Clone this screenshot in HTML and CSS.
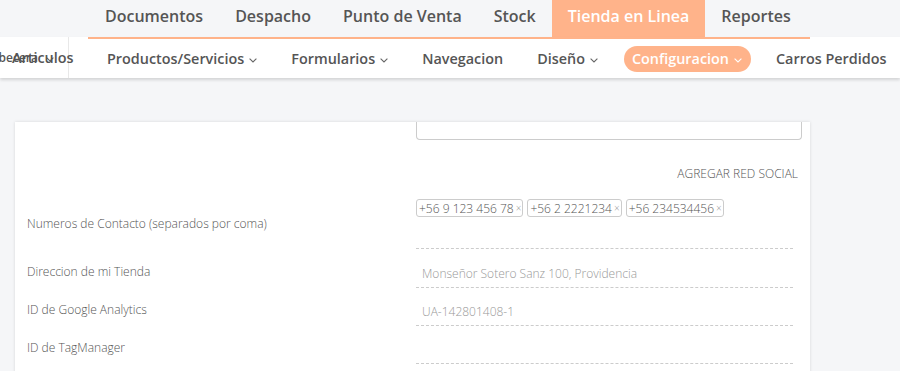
FILE: index.html
```html
<!DOCTYPE html>
<html lang="es">
<head>
    <meta charset="UTF-8">
    <meta name="viewport" content="width=device-width, initial-scale=1.0">
    <title>Tienda en Linea - Configuracion</title>
    <link rel="stylesheet" href="styles.css">
</head>
<body>
    <header class="header">
        <nav class="topnav">
            <a class="topnav-item">Documentos</a>
            <a class="topnav-item">Despacho</a>
            <a class="topnav-item">Punto de Venta</a>
            <a class="topnav-item">Stock</a>
            <a class="topnav-item active">Tienda en Linea</a>
            <a class="topnav-item">Reportes</a>
        </nav>

        <nav class="subnav">
            <div class="subnav-side">
                <span class="subnav-hidden">Cabecera <svg class="chev" viewBox="0 0 8 5"><path d="M0.6 0.6 L4 4 L7.4 0.6"/></svg></span>
                <span class="subnav-side-label">Articulos</span>
            </div>
            <div class="subnav-list">
                <a class="subnav-item">Productos/Servicios <svg class="chev" viewBox="0 0 8 5"><path d="M0.6 0.6 L4 4 L7.4 0.6"/></svg></a>
                <a class="subnav-item">Formularios <svg class="chev" viewBox="0 0 8 5"><path d="M0.6 0.6 L4 4 L7.4 0.6"/></svg></a>
                <a class="subnav-item">Navegacion</a>
                <a class="subnav-item">Diseño <svg class="chev" viewBox="0 0 8 5"><path d="M0.6 0.6 L4 4 L7.4 0.6"/></svg></a>
                <a class="subnav-item pill">Configuracion <svg class="chev" viewBox="0 0 8 5"><path d="M0.6 0.6 L4 4 L7.4 0.6"/></svg></a>
                <a class="subnav-item">Carros Perdidos</a>
            </div>
        </nav>
    </header>

    <main class="main">
        <div class="card">
            <div class="form-row">
                <div></div>
                <div class="textarea-end"></div>
            </div>

            <div class="form-row">
                <div></div>
                <div class="add-social">AGREGAR RED SOCIAL</div>
            </div>

            <div class="form-row center">
                <label class="form-label">Numeros de Contacto (separados por coma)</label>
                <div class="field tags-field">
                    <span class="tag">+56 9 123 456 78 <span class="tag-x">×</span></span>
                    <span class="tag">+56 2 2221234 <span class="tag-x">×</span></span>
                    <span class="tag">+56 234534456 <span class="tag-x">×</span></span>
                </div>
            </div>

            <div class="form-row first-input">
                <label class="form-label">Direccion de mi Tienda</label>
                <div class="field input">Monseñor Sotero Sanz 100, Providencia</div>
            </div>

            <div class="form-row">
                <label class="form-label">ID de Google Analytics</label>
                <div class="field input">UA-142801408-1</div>
            </div>

            <div class="form-row">
                <label class="form-label">ID de TagManager</label>
                <div class="field input"></div>
            </div>
        </div>
    </main>
</body>
</html>
```

FILE: styles.css
```css
body {
    margin: 0;
    font-family: "Open Sans", "Liberation Sans", sans-serif;
    background: #f5f6f8;
    color: #555;
    overflow: hidden;
}
a {
    cursor: pointer;
}

/* top navigation */
.topnav {
    display: flex;
    height: 37px;
    padding-left: 89px;
    background: #f5f6f8;
}
.topnav-item {
    padding: 0 16px;
    font-size: 16px;
    font-weight: 600;
    line-height: 33px;
    color: #555;
}
.topnav-item.active {
    background: #ffb38a;
    color: #fff;
}

/* second navigation */
.subnav {
    position: relative;
    display: flex;
    height: 39px;
    background: #fff;
    border-top: 2px solid #ffb38a;
    border-image: linear-gradient(to right, transparent 89px, #ffb38a 89px, #ffb38a 809px, transparent 809px) 1;
    border-left: 0;
    border-right: 0;
    border-bottom: 0;
    box-shadow: 0 2px 3px rgba(0,0,0,0.14);
}
.subnav-side {
    position: relative;
    width: 68px;
    border-right: 1px solid #e8e8e8;
    margin-top: -2px;
    padding-top: 2px;
}
.subnav-side-label {
    position: absolute;
    left: 12px;
    top: 11px;
    font-size: 14.4px;
    font-weight: 600;
    color: #555;
    white-space: nowrap;
}
.subnav-hidden {
    position: absolute;
    left: -16px;
    top: 12px;
    font-size: 12px;
    font-weight: 600;
    color: #555;
    white-space: nowrap;
}
.subnav-list {
    display: flex;
    align-items: center;
    gap: 34px;
    margin-left: 38px;
}
.subnav-item {
    display: flex;
    align-items: center;
    font-size: 14.4px;
    font-weight: 600;
    color: #555;
    white-space: nowrap;
}
.subnav-item.pill {
    height: 26px;
    padding: 0 9px 0 8px;
    margin: 0 -9px 0 -8px;
    border-radius: 13px;
    background: #ffb38a;
    color: #fff;
}
.chev {
    width: 8px;
    height: 5px;
    margin-left: 5px;
    margin-top: 3px;
    fill: none;
    stroke: #666;
    stroke-width: 1.1;
}
.pill .chev {
    stroke: #fff;
}

/* content */
.main {
    padding: 44px 0 0 15px;
}
.card {
    width: 775px;
    min-height: 300px;
    padding: 0 8px 0 12px;
    background: #fff;
    box-shadow: 0 0 3px rgba(0,0,0,0.13);
}
.form-row {
    display: grid;
    grid-template-columns: 389px 386px;
    align-items: end;
}
.form-row.center {
    align-items: center;
}
.form-row.first-input {
    margin-top: 1px;
}
.textarea-end {
    height: 17px;
    border: 1px solid #ccc;
    border-top: 0;
    border-radius: 0 0 4px 4px;
}
.add-social {
    margin: 25px 0 15px;
    padding-right: 4px;
    text-align: right;
    font-size: 12px;
    font-weight: 300;
    line-height: 17px;
    color: #555;
}
.form-label {
    padding-bottom: 8px;
    font-size: 12px;
    font-weight: 300;
    line-height: 17px;
    color: #555;
}
.center .form-label {
    padding-bottom: 0;
    margin-top: 0;
}
.field {
    margin-right: 9px;
    border-bottom: 1px dashed #ccc;
}
.input {
    box-sizing: border-box;
    height: 38px;
    padding: 0 6px 5px;
    display: flex;
    align-items: flex-end;
    font-size: 12px;
    font-weight: 300;
    line-height: 17px;
    color: #999;
}
.tags-field {
    display: flex;
    align-items: flex-start;
    gap: 4px;
    height: 49px;
    padding-top: 2px;
}
.tag {
    display: flex;
    align-items: center;
    box-sizing: border-box;
    height: 18px;
    padding: 0 1px 0 2px;
    border: 1px solid #ccc;
    border-radius: 3px;
    font-size: 12px;
    font-weight: 300;
    color: #555;
    white-space: nowrap;
}
.tag-x {
    margin-left: 2px;
    font-size: 10px;
    color: #999;
}
```
